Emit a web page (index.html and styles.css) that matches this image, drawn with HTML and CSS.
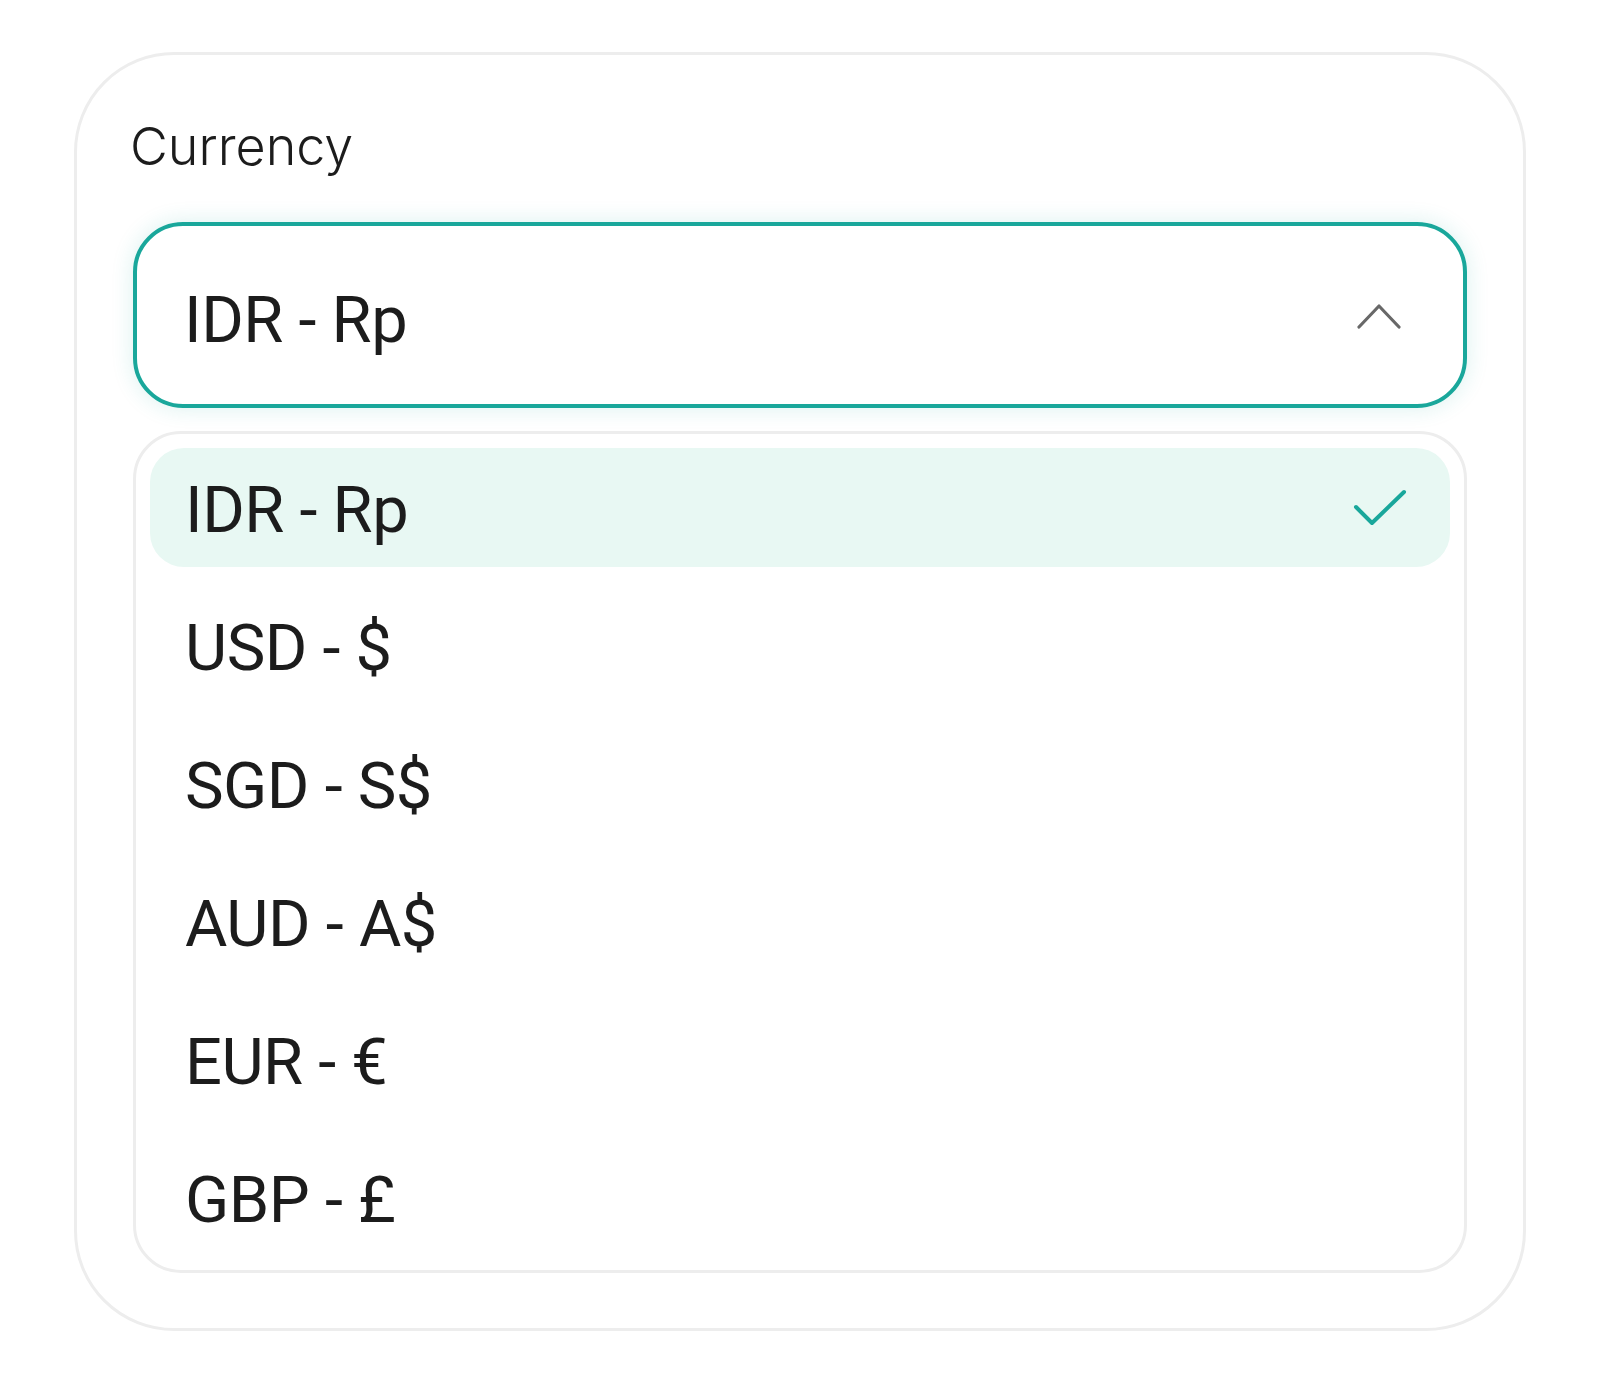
FILE: index.html
```html
<!DOCTYPE html>
<html lang="en">
<head>
    <meta charset="UTF-8">
    <meta name="viewport" content="width=device-width, initial-scale=1.0">
    <title>Currency</title>
    <link rel="stylesheet" href="styles.css">
</head>
<body>
    <div class="card">
        <div class="field-label">Currency</div>

        <!-- Select abierto -->
        <div class="select-trigger">
            <span class="select-value">IDR - Rp</span>
            <svg class="chevron" width="44" height="26" viewBox="0 0 44 26">
                <polyline points="2,24 22,3 42,24" fill="none" stroke="#686868" stroke-width="3.2" stroke-linecap="round" stroke-linejoin="round"/>
            </svg>
        </div>

        <ul class="options">
            <li class="option selected">
                <span>IDR - Rp</span>
                <svg class="check" width="54" height="38" viewBox="0 0 54 38">
                    <polyline points="3,18 19,34 51,3" fill="none" stroke="#19a79b" stroke-width="4" stroke-linecap="round" stroke-linejoin="round"/>
                </svg>
            </li>
            <li class="option"><span>USD - $</span></li>
            <li class="option"><span>SGD - S$</span></li>
            <li class="option"><span>AUD - A$</span></li>
            <li class="option"><span>EUR - €</span></li>
            <li class="option"><span>GBP - £</span></li>
        </ul>
    </div>
</body>
</html>
```

FILE: styles.css
```css
body {
    margin: 0;
    padding: 0;
    background: #ffffff;
    font-family: 'Inter', 'Noto Sans', sans-serif;
    color: #1c1c1c;
}

.card {
    box-sizing: border-box;
    width: 1452px;
    margin: 52px 0 0 74px;
    padding: 60px 56px 55px;
    border: 3px solid #ededed;
    border-radius: 100px;
    background: #ffffff;
}

.field-label {
    font-size: 52px;
    line-height: 63px;
    margin-bottom: 44px;
    margin-left: -3px;
    font-weight: 300;
}

/* Campo del select */
.select-trigger {
    box-sizing: border-box;
    height: 186px;
    display: flex;
    align-items: center;
    justify-content: space-between;
    padding: 10px 62px 0 47px;
    border: 4px solid #19a79b;
    border-radius: 50px;
    box-shadow: 0 0 22px rgba(25, 167, 155, 0.16);
}

.select-value,
.option {
    font-family: 'Roboto', 'Inter', sans-serif;
    font-size: 65px;
    line-height: 78px;
    letter-spacing: -0.5px;
}

.chevron {
    margin-top: -9px;
}

/* Lista de opciones */
.options {
    list-style: none;
    margin: 23px 0 0;
    padding: 14px 14px 13px;
    border: 3px solid #ededed;
    border-radius: 48px;
    display: flex;
    flex-direction: column;
    gap: 19px;
}

.option {
    box-sizing: border-box;
    height: 119px;
    display: flex;
    align-items: center;
    justify-content: space-between;
    padding: 4px 43px 0 35px;
    border-radius: 34px;
}

.option.selected {
    background-color: #e8f8f3;
}

.check {
    margin-top: -4px;
}
```
